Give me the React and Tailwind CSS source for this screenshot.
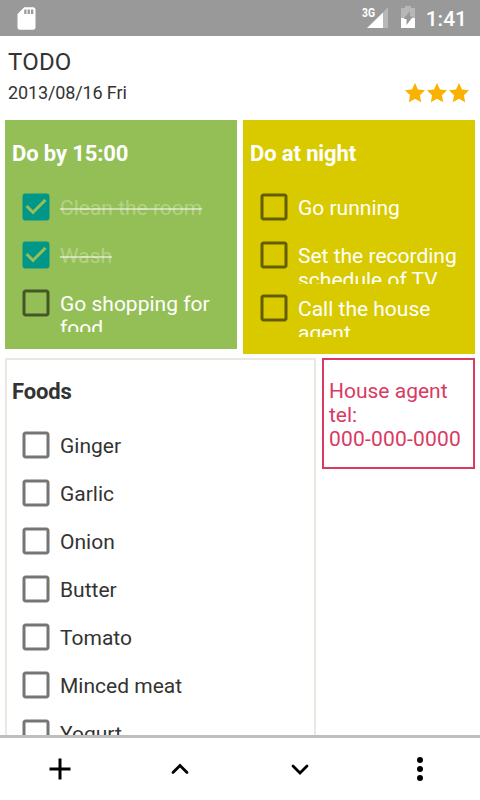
import React from 'react';
import { MdAdd, MdCheckBox, MdCheckBoxOutlineBlank, MdSdCard } from 'react-icons/md';

const morning = [
  { id: 1, title: 'Clean the room', done: true },
  { id: 2, title: 'Wash', done: true },
  { id: 3, title: 'Go shopping for food', tall: true },
];

const night = [
  { id: 1, title: 'Go running' },
  { id: 2, title: 'Set the recording schedule of TV', tall: true },
  { id: 3, title: 'Call the house agent', tall: true },
];

const foods = ['Ginger', 'Garlic', 'Onion', 'Butter', 'Tomato', 'Minced meat', 'Yogurt'].map(
  (title, i) => ({ id: i, title })
);

function StatusBar() {
  return (
    <div className="flex h-9 shrink-0 items-center bg-[#999999] text-white">
      <MdSdCard className="ml-[13px]" size={27} />
      <div className="flex-1" />
      <svg className="h-9 w-[66px]" viewBox="0 0 66 36">
        <text
          x="2"
          y="16.500"
          fill="#fff"
          fontFamily="Roboto"
          fontWeight="700"
          fontSize="12"
          textLength="13"
          lengthAdjust="spacingAndGlyphs"
        >
          3G
        </text>
        <path d="M23 12.500 28 7v21h-5z" fill="#fff" fillOpacity="0.3" />
        <path d="M7 28 23 12.500V28z" fill="#fff" />
        <path d="M41 8h4V6h6v2h4v10H41z" fill="#fff" fillOpacity="0.3" />
        <path d="M41 18h14v10H41z" fill="#fff" />
        <path d="M50 11 43.500 19h3v6l6.500-8.500h-3z" fill="#999999" />
      </svg>
      <span className="mr-[13px] text-[21px] font-medium leading-9 pt-px">1:41</span>
    </div>
  );
}

function Star() {
  return (
    <svg className="h-6 w-[22px]" viewBox="1 0 22 24" fill="#f9b200">
      <path d="M12 2l3 6.400 7 .9-5.100 4.900 1.300 7L12 17.700 5.800 21.200l1.300-7L2 9.300l7-.9z" />
    </svg>
  );
}

function TodoItem({ item }) {
  return (
    <li className={`flex overflow-hidden pl-[11px] ${item.tall ? 'h-[53px]' : 'h-12'}`}>
      {item.done ? (
        <MdCheckBox className="mt-1.5 shrink-0 text-[#009688]" size={36} />
      ) : (
        <MdCheckBoxOutlineBlank className="mt-1.5 shrink-0 text-black/54" size={36} />
      )}
      <span
        className={`ml-1.5 mt-[13px] text-[21px] leading-6 ${
          item.done ? 'text-white/30 line-through decoration-white/50 decoration-2' : ''
        }`}
      >
        {item.title}
      </span>
    </li>
  );
}

function TodoCard({ title, items, className }) {
  return (
    <section className={`border-2 pb-[15px] ${className}`}>
      <h2 className="h-[61px] pl-[5px] pt-[18px] text-[22px] font-bold leading-7 tracking-[-0.12px]">
        {title}
      </h2>
      <ul>
        {items.map(item => (
          <TodoItem key={item.id} item={item} />
        ))}
      </ul>
    </section>
  );
}

export default function App() {
  return (
    <div className="flex h-[800px] w-[480px] flex-col overflow-hidden bg-white font-[Roboto,sans-serif] text-[#333333]">
      <StatusBar />

      {/* Page title, date and rating */}
      <header className="h-[84px] shrink-0 pl-2 pr-[10px]">
        <h1 className="pt-[10px] text-2xl leading-8 tracking-[0.2px]">TODO</h1>
        <div className="flex items-center justify-between">
          <span className="text-lg leading-[30px] tracking-[-0.13px]">2013/08/16 Fri</span>
          <div className="flex">
            <Star />
            <Star />
            <Star />
          </div>
        </div>
      </header>

      <main className="min-h-0 flex-1 overflow-hidden px-[5px]">
        <div className="flex h-[238px] items-start gap-1.5">
          <TodoCard
            title="Do by 15:00"
            items={morning}
            className="w-[232px] border-[#94bf56] bg-[#94bf56] text-white"
          />
          <TodoCard
            title="Do at night"
            items={night}
            className="w-[232px] border-[#d9ca00] bg-[#d9ca00] text-white"
          />
        </div>
        <div className="flex items-start gap-1.5">
          <TodoCard title="Foods" items={foods} className="w-[311px] border-[#ebe7e1]" />
          <section className="h-[111px] w-[153px] border-2 border-[#d93a62] pl-[5px] pt-[19px] text-[21px] leading-6 text-[#d93a62]">
            House agent
            <br />
            tel:
            <br />
            <span className="tracking-[0.2px]">000-000-0000</span>
          </section>
        </div>
      </main>

      <nav className="grid h-[65px] shrink-0 grid-cols-4 place-items-center border-t-[3px] border-[#bdbdbd] text-black">
        <MdAdd size={36} />
        <svg
          className="size-9"
          viewBox="0 0 36 36"
          fill="none"
          stroke="currentColor"
          strokeWidth="2.800"
          strokeLinecap="round"
        >
          <path d="M11 21.500 18 14.500l7 7" />
        </svg>
        <svg
          className="size-9"
          viewBox="0 0 36 36"
          fill="none"
          stroke="currentColor"
          strokeWidth="2.800"
          strokeLinecap="round"
        >
          <path d="M11 15 18 22l7-7" />
        </svg>
        <svg className="size-9" viewBox="0 0 36 36" fill="currentColor">
          <circle cx="18" cy="9" r="3" />
          <circle cx="18" cy="18" r="3" />
          <circle cx="18" cy="27" r="3" />
        </svg>
      </nav>
    </div>
  );
}
